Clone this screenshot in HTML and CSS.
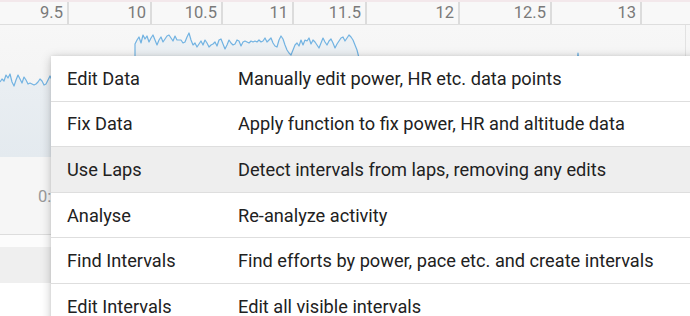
FILE: index.html
```html
<!DOCTYPE html>
<html>
<head>
<meta charset="utf-8">
<link rel="stylesheet" href="styles.css">
</head>
<body>
<div class="page">
  <div class="topline"></div>
  <div class="axis">
    <div class="tick">9.5</div>
    <div class="tick">10</div>
    <div class="tick">10.5</div>
    <div class="tick">11</div>
    <div class="tick">11.5</div>
    <div class="tick">12</div>
    <div class="tick">12.5</div>
    <div class="tick">13</div>
    <div class="tick last"></div>
  </div>
  <div class="chart">
    <svg class="chart-svg" width="690" height="132" viewBox="0 25 690 132" preserveAspectRatio="none">
      <defs>
        <linearGradient id="bg" x1="0" y1="0" x2="0" y2="1">
          <stop offset="0" stop-color="#f7f7f7"/>
          <stop offset="1" stop-color="#f1f1f1"/>
        </linearGradient>
        <linearGradient id="fill" x1="0" y1="0" x2="0" y2="1">
          <stop offset="0" stop-color="#edf1f4"/>
          <stop offset="1" stop-color="#e4eaef"/>
        </linearGradient>
      </defs>
      <rect x="0" y="25" width="690" height="132" fill="url(#bg)"/>
      <polygon fill="url(#fill)" points="0,157 0,82 2,79 4,81 6,75 8,78 10,74 12,82 14,86 16,80 18,75 20,79 22,83 24,77 26,80 28,84 30,83 32,84 34,85 36,84 38,82 40,79 42,81 44,85 46,84 48,80 50,76 52,80 60,84 80,78 100,83 120,79 134,82 135,56 135,44 137,40 139,37 141,43 143,35 145,39 147,36 149,42 151,38 153,35 155,40 157,45 159,40 161,37 163,42 165,39 167,36 169,35 171,38 173,41 175,36 177,40 179,40 181,40 183,43 185,42 187,37 189,33 191,40 193,45 195,43 197,47 199,44 201,41 203,45 205,40 207,43 209,47 211,45 213,44 215,42 217,46 219,40 221,39 223,44 225,49 227,45 229,40 231,43 233,45 235,44 237,40 239,41 241,46 243,42 245,41 247,42 249,43 251,41 253,42 255,41 257,42 259,40 261,42 263,41 265,38 267,42 269,40 271,38 273,43 275,46 277,47 279,40 281,36 283,39 285,45 287,50 289,53 291,55 293,50 295,45 297,43 299,46 301,40 303,45 305,40 307,41 309,38 311,44 313,40 315,42 317,45 319,48 321,43 323,38 325,42 327,45 329,41 331,39 333,43 335,48 337,44 339,41 341,38 343,37 345,41 347,38 349,35 351,37 353,40 355,45 357,50 359,58 400,70 500,72 576,70 578,53 580,70 640,74 684,76 684,157"/>
      <polyline fill="none" stroke="#72b3e2" stroke-width="1.2" stroke-linejoin="round" points="0,82 2,79 4,81 6,75 8,78 10,74 12,82 14,86 16,80 18,75 20,79 22,83 24,77 26,80 28,84 30,83 32,84 34,85 36,84 38,82 40,79 42,81 44,85 46,84 48,80 50,76 52,80 60,84 80,78 100,83 120,79 134,82 135,56 135,44 137,40 139,37 141,43 143,35 145,39 147,36 149,42 151,38 153,35 155,40 157,45 159,40 161,37 163,42 165,39 167,36 169,35 171,38 173,41 175,36 177,40 179,40 181,40 183,43 185,42 187,37 189,33 191,40 193,45 195,43 197,47 199,44 201,41 203,45 205,40 207,43 209,47 211,45 213,44 215,42 217,46 219,40 221,39 223,44 225,49 227,45 229,40 231,43 233,45 235,44 237,40 239,41 241,46 243,42 245,41 247,42 249,43 251,41 253,42 255,41 257,42 259,40 261,42 263,41 265,38 267,42 269,40 271,38 273,43 275,46 277,47 279,40 281,36 283,39 285,45 287,50 289,53 291,55 293,50 295,45 297,43 299,46 301,40 303,45 305,40 307,41 309,38 311,44 313,40 315,42 317,45 319,48 321,43 323,38 325,42 327,45 329,41 331,39 333,43 335,48 337,44 339,41 341,38 343,37 345,41 347,38 349,35 351,37 353,40 355,45 357,50 359,58 400,70 500,72 576,70 578,53 580,70 640,74 684,76"/>
      <line x1="685.5" y1="25" x2="685.5" y2="157" stroke="#e2e2e2" stroke-width="1"/>
    </svg>
  </div>
  <div class="stats"><span class="stat-label">0:</span></div>
  <div class="spacer"></div>
  <div class="band"></div>

  <div class="menu">
    <div class="item"><span class="name">Edit Data</span><span class="desc">Manually edit power, HR etc. data points</span></div>
    <div class="item"><span class="name">Fix Data</span><span class="desc">Apply function to fix power, HR and altitude data</span></div>
    <div class="item active"><span class="name">Use Laps</span><span class="desc">Detect intervals from laps, removing any edits</span></div>
    <div class="item"><span class="name">Analyse</span><span class="desc">Re-analyze activity</span></div>
    <div class="item"><span class="name">Find Intervals</span><span class="desc">Find efforts by power, pace etc. and create intervals</span></div>
    <div class="item"><span class="name">Edit Intervals</span><span class="desc">Edit all visible intervals</span></div>
  </div>
</div>
</body>
</html>
```
FILE: styles.css
```css
* { box-sizing: border-box; }
html, body { margin: 0; padding: 0; }
body {
  width: 690px;
  height: 316px;
  overflow: hidden;
  background: #ffffff;
  font-family: Roboto, "Liberation Sans", sans-serif;
}
.page {
  position: relative;
  width: 690px;
  height: 316px;
  overflow: hidden;
}
.topline {
  height: 2px;
  background: #f3e8eb;
}
.axis {
  height: 23px;
  display: grid;
  grid-template-columns: 69px 83px 71px 71px 73px 93px 92px 90px 1fr;
  background: #f8f8f8;
  border-bottom: 1px solid #dedede;
}
.tick {
  border-right: 2px solid #dcdcdc;
  text-align: right;
  padding-right: 4px;
  font-size: 16.5px;
  line-height: 22px;
  color: #7a7a7a;
}
.tick.last { border-right: none; }
.chart {
  height: 132px;
  border-bottom: 1px solid #e4e4e4;
}
.chart-svg { display: block; }
.stats {
  height: 78px;
  background: #f6f6f6;
  border-bottom: 1px solid #dddddd;
  display: flex;
  align-items: center;
  padding-left: 38px;
}
.stat-label {
  font-size: 16.5px;
  color: #9a9a9a;
  margin-top: 2px;
}
.spacer {
  height: 12px;
  background: #fcfcfc;
}
.band {
  height: 36px;
  background: #efefef;
}
.menu {
  position: absolute;
  left: 51px;
  top: 56px;
  width: 660px;
  background: #ffffff;
  box-shadow: 0 2px 10px rgba(0, 0, 0, 0.22), 0 0 3px rgba(0, 0, 0, 0.08);
}
.item {
  display: grid;
  grid-template-columns: 171px 1fr;
  align-items: center;
  height: 45.6px;
  padding-left: 16px;
  border-bottom: 1px solid #dedede;
  font-size: 18.2px;
  color: #212121;
  white-space: nowrap;
}
.item.active { background: #eeeeee; }
```
